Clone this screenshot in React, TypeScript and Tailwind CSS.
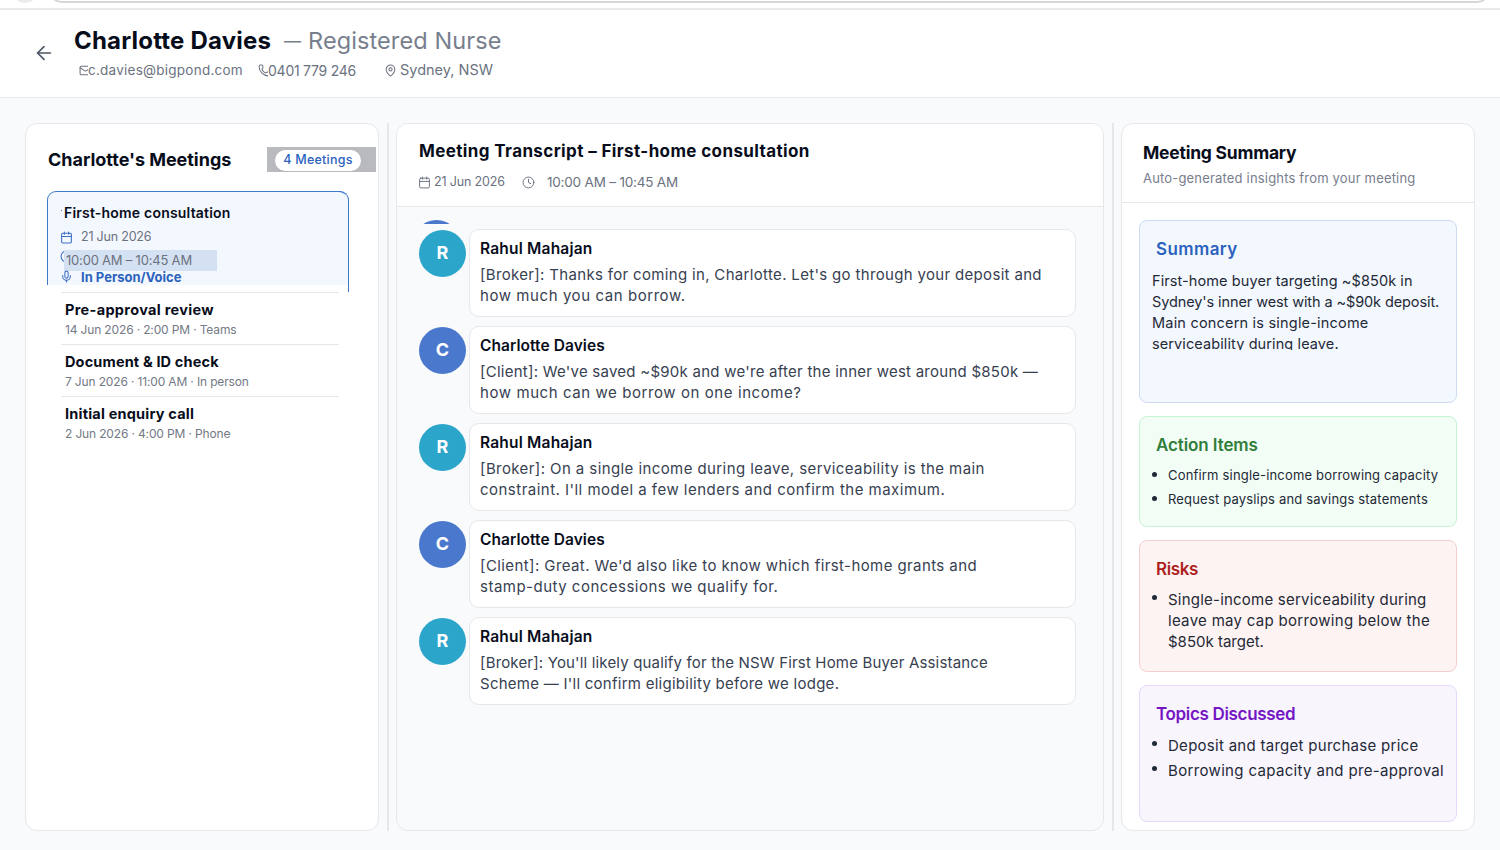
import { ArrowLeft, Calendar, Clock, Mail, MapPin, Mic, Phone } from "lucide-react";
import clsx from "clsx";

interface Message {
  initial: string;
  name: string;
  lines: { text: string; className: string }[];
}

const messages: Message[] = [
  {
    initial: "R",
    name: "Rahul Mahajan",
    lines: [
      { text: "[Broker]: Thanks for coming in, Charlotte. Let's go through your deposit and", className: "tracking-[0.33px]" },
      { text: "how much you can borrow.", className: "tracking-[0.57px]" },
    ],
  },
  {
    initial: "C",
    name: "Charlotte Davies",
    lines: [
      { text: "[Client]: We've saved ~$90k and we're after the inner west around $850k —", className: "tracking-[0.25px]" },
      { text: "how much can we borrow on one income?", className: "tracking-[0.58px]" },
    ],
  },
  {
    initial: "R",
    name: "Rahul Mahajan",
    lines: [
      { text: "[Broker]: On a single income during leave, serviceability is the main", className: "tracking-[0.41px]" },
      { text: "constraint. I'll model a few lenders and confirm the maximum.", className: "tracking-[0.48px]" },
    ],
  },
  {
    initial: "C",
    name: "Charlotte Davies",
    lines: [
      { text: "[Client]: Great. We'd also like to know which first-home grants and", className: "tracking-[0.41px]" },
      { text: "stamp-duty concessions we qualify for.", className: "tracking-[0.49px]" },
    ],
  },
  {
    initial: "R",
    name: "Rahul Mahajan",
    lines: [
      { text: "[Broker]: You'll likely qualify for the NSW First Home Buyer Assistance", className: "tracking-[0.17px]" },
      { text: "Scheme — I'll confirm eligibility before we lodge.", className: "tracking-[0.26px]" },
    ],
  },
];

const pastMeetings = [
  { title: "Pre-approval review", meta: "14 Jun 2026 · 2:00 PM · Teams", className: "tracking-[0.32px]" },
  { title: "Document & ID check", meta: "7 Jun 2026 · 11:00 AM · In person", className: "tracking-[0.15px]" },
  { title: "Initial enquiry call", meta: "2 Jun 2026 · 4:00 PM · Phone", className: "tracking-[0.2px]" },
];

function BrowserEdge() {
  return (
    <div className="flex h-[10px] items-start overflow-hidden border-b-2 border-[#e9eaec] bg-white">
      <div className="-mt-[25px] ml-[11px] h-[28px] w-[28px] shrink-0 rounded-full bg-[#ececee]" />
      <div className="-mt-[25px] ml-[9px] h-[28px] w-[1443px] shrink-0 rounded-full border-2 border-[#d5d6d8] bg-white" />
    </div>
  );
}

function ClientHeader() {
  return (
    <header className="flex h-[88px] border-b border-[#e5e7eb] bg-white">
      <ArrowLeft className="ml-[33px] mt-[32px] h-[22px] w-[22px] text-[#4b5563]" strokeWidth={1.8} />
      <div className="ml-[19px] pt-[15px]">
        <div className="flex h-[32px] items-center leading-8">
          <h1 className="w-[210px] text-[24px] font-bold tracking-[0.2px] text-[#080d1b]">Charlotte Davies</h1>
          <span className="w-[24px] text-[17px] text-[#777e8c]">—</span>
          <span className="text-[23.5px] tracking-[0.1px] text-[#777e8c]">Registered Nurse</span>
        </div>
        <div className="mt-[3px] flex h-5 items-center text-[#6b7280]">
          <div className="ml-[5px] flex w-[179px] items-center">
            {/* the label sits over the right half of the envelope */}
            <div className="w-[9px] overflow-hidden">
              <Mail className="h-[13px] w-[13px]" strokeWidth={1.9} />
            </div>
            <span className="text-[13.5px] tracking-[0.24px]">c.davies@bigpond.com</span>
          </div>
          <div className="flex w-[127px] items-center">
            <div className="w-[10px] overflow-hidden">
              <Phone className="h-[13px] w-[13px]" strokeWidth={1.9} />
            </div>
            <span className="text-[14px] tracking-[-0.25px]">0401 779 246</span>
          </div>
          <MapPin className="-ml-[1px] h-[13px] w-[13px]" strokeWidth={1.9} />
          <span className="ml-[3px] text-[14.5px]">Sydney, NSW</span>
        </div>
      </div>
    </header>
  );
}

function MeetingsPanel() {
  return (
    <aside className="w-[354px] shrink-0 rounded-[12px] border border-[#e5e7eb] bg-white">
      <div className="mt-[23px] flex h-[25px] items-center justify-between pl-[22px] pr-[2px]">
        <h2 className="text-[18px] font-bold tracking-[-0.03px] text-[#080d1b]">Charlotte's Meetings</h2>
        <div className="flex h-[25px] w-[109px] items-end bg-[#b9babd] pb-px pl-2">
          <span className="flex h-[21px] w-[86px] items-center justify-center rounded-full bg-white pb-px text-[12.5px] font-medium tracking-[0.25px] text-[#2b62bd]">
            4 Meetings
          </span>
        </div>
      </div>

      <div className="ml-[21px] mt-[19px] flex h-[101px] w-[302px] items-start">
        <div className="h-[94px] w-[301px] rounded-t-[9px] border border-b-0 border-[#3f78cb] border-r-transparent bg-[#f3f7fe] pl-[12px]">
          <div className="mt-[11px] flex h-5">
            <span className="ml-[1px] mt-[7px] h-px w-px bg-[#6b7280]" />
            <h3 className="ml-[2px] text-[14px] font-semibold leading-5 tracking-[0.2px] text-[#080d1b]">
              First-home consultation
            </h3>
          </div>
          <div className="mt-[4px] flex h-5 items-center">
            <Calendar className="h-[13px] w-[13px] text-[#3f70c4]" strokeWidth={2} />
            <span className="ml-[8px] text-[12.5px] tracking-[-0.2px] text-[#6b7280]">21 Jun 2026</span>
          </div>
          <div className="mt-[3px] flex h-[21px]">
            <div className="w-[4px] overflow-hidden">
              <Clock className="h-[13px] w-[13px] text-[#3f70c4]" strokeWidth={2} />
            </div>
            <div className="w-[153px] bg-[#d4e1f2] pl-[2px] text-[13px] leading-[21px] tracking-[-0.2px] text-[#6b7280]">
              10:00 AM – 10:45 AM
            </div>
          </div>
          <div className="flex h-[11px] items-center">
            <Mic className="h-[13px] w-[13px] text-[#3f70c4]" strokeWidth={2} />
            <span className="ml-[8px] text-[13px] font-bold leading-3 text-[#2b62bd]">In Person/Voice</span>
          </div>
        </div>
        <div className="-ml-[9px] h-[101px] w-[10px] rounded-tr-[9px] border-r border-t border-[#3f78cb]" />
      </div>

      <ul className="ml-[35px] w-[278px]">
        {pastMeetings.map((m) => (
          <li key={m.title} className="h-[52px] border-t border-[#e5e7eb] pl-[4px] pt-[7px]">
            <div className={clsx("h-5 text-[14.5px] font-bold leading-5 text-[#080d1b]", m.className)}>{m.title}</div>
            <div className="h-5 text-[12px] leading-5 tracking-[-0.15px] text-[#737985]">{m.meta}</div>
          </li>
        ))}
      </ul>
    </aside>
  );
}

function TranscriptPanel() {
  return (
    <main className="w-[708px] shrink-0 overflow-hidden rounded-[12px] border border-[#e5e7eb] bg-[#f9fafc]">
      <div className="h-[83px] border-b border-[#e5e7eb] bg-white pl-[22px] pt-[15px]">
        <h2 className="h-6 text-[17px] font-bold leading-6 tracking-[0.38px] text-[#080d1b]">
          Meeting Transcript – First-home consultation
        </h2>
        <div className="mt-[9px] flex h-5 items-center whitespace-nowrap text-[#6b7280]">
          <Calendar className="-ml-[1px] h-[13px] w-[13px]" strokeWidth={1.8} />
          <span className="ml-[3px] w-[88px] text-[12.5px] tracking-[-0.15px]">21 Jun 2026</span>
          <Clock className="h-[13px] w-[13px]" strokeWidth={1.8} />
          <span className="ml-[12px] text-[13.5px] tracking-[-0.2px]">10:00 AM – 10:45 AM</span>
        </div>
      </div>

      <div className="pl-[22px] pt-[13px]">
        {/* last bit of the previous avatar, scrolled out of view */}
        <div className="h-[4px] overflow-hidden">
          <div className="-ml-[6px] h-[47px] w-[47px] rounded-full bg-[#4a78cc]" />
        </div>
        <div className="mt-[5px] space-y-[9px]">
          {messages.map((m, i) => (
            <div key={i} className="flex">
              <div
                className={clsx(
                  "mt-px flex h-[47px] w-[47px] shrink-0 items-center justify-center rounded-full pb-[2px] text-[18px] font-bold text-white",
                  m.initial === "R" ? "bg-[#2ca5cb]" : "bg-[#4a78cc]"
                )}
              >
                {m.initial}
              </div>
              <div className="ml-[3px] h-[88px] w-[607px] whitespace-nowrap rounded-[10px] border border-[#e5e7eb] bg-white pl-[10px] pt-[9px]">
                <div
                  className={clsx(
                    "h-5 text-[15.5px] font-semibold leading-5 text-[#080d1b]",
                    m.initial === "R" ? "tracking-[0.2px]" : "tracking-[0.06px]"
                  )}
                >
                  {m.name}
                </div>
                <div className="mt-[5px] text-[15px] leading-[21px] text-[#374151]">
                  {m.lines.map((l) => (
                    <div key={l.text} className={l.className}>{l.text}</div>
                  ))}
                </div>
              </div>
            </div>
          ))}
        </div>
      </div>
    </main>
  );
}

function Bullet({ className }: { className?: string }) {
  return <span className={clsx("h-[5px] w-[5px] shrink-0 rounded-full bg-[#1f2937]", className)} />;
}

function SummaryPanel() {
  return (
    <aside className="w-[354px] shrink-0 rounded-[12px] border border-[#e5e7eb] bg-white">
      <div className="h-[79px] border-b border-[#e5e7eb] pl-[21px] pt-[17px]">
        <h2 className="h-6 text-[17.5px] font-bold leading-6 tracking-[-0.23px] text-[#080d1b]">Meeting Summary</h2>
        <p className="mt-[3px] text-[13px] leading-5 tracking-[0.18px] text-[#777e8c]">
          Auto-generated insights from your meeting
        </p>
      </div>

      <div className="whitespace-nowrap px-[17px] pt-[17px] text-[#1f2937]">
        <section className="h-[183px] rounded-[8px] border border-[#cddbf3] bg-[#f3f7fe] pl-[12px] pt-[16px]">
          <h3 className="h-6 pl-1 text-[17px] font-semibold leading-6 tracking-[0.4px] text-[#2b62bd]">Summary</h3>
          <div className="mt-[9px] h-[80px] overflow-hidden text-[14.5px] leading-[21px]">
            <div className="tracking-[0.09px]">First-home buyer targeting ~$850k in</div>
            <div className="tracking-[-0.1px]">Sydney's inner west with a ~$90k deposit.</div>
            <div className="tracking-[0.2px]">Main concern is single-income</div>
            <div className="tracking-[0.1px]">serviceability during leave.</div>
          </div>
        </section>

        <section className="mt-[13px] h-[111px] rounded-[8px] border border-[#c6f3d3] bg-[#f2fdf5] pl-[12px] pt-[16px]">
          <h3 className="h-6 pl-[4px] text-[17px] font-semibold leading-6 tracking-[-0.1px] text-[#317e3c]">Action Items</h3>
          <div className="mt-[6px] flex h-6 text-[13px] leading-6 tracking-[0.18px]">
            <Bullet className="mr-[11px] mt-[9px]" />
            <span>Confirm single-income borrowing capacity</span>
          </div>
          <div className="flex h-6 text-[13px] leading-6 tracking-[0.18px]">
            <Bullet className="mr-[11px] mt-[9px]" />
            <span>Request payslips and savings statements</span>
          </div>
        </section>

        <section className="mt-[13px] h-[132px] rounded-[8px] border border-[#f5cfcf] bg-[#fdf3f2] pl-[12px] pt-[16px]">
          <h3 className="h-6 pl-[4px] text-[17px] font-semibold leading-6 tracking-[-0.4px] text-[#ad1f1f]">Risks</h3>
          <div className="mt-[8px] flex text-[15px] leading-[21px]">
            <Bullet className="mr-[11px] mt-[6px]" />
            <div>
              <div className="tracking-[0.22px]">Single-income serviceability during</div>
              <div className="tracking-[0.3px]">leave may cap borrowing below the</div>
              <div>$850k target.</div>
            </div>
          </div>
        </section>

        <section className="mt-[13px] h-[137px] rounded-[8px] border border-[#e5d8fa] bg-[#f8f5fd] pl-[12px] pt-[16px]">
          <h3 className="h-6 pl-[4px] text-[17px] font-semibold leading-6 tracking-[-0.33px] text-[#7416c4]">
            Topics Discussed
          </h3>
          <div className="mt-[7px] flex h-[25px] text-[15px] leading-[25px] tracking-[0.28px]">
            <Bullet className="mr-[11px] mt-[8px]" />
            <span>Deposit and target purchase price</span>
          </div>
          <div className="flex h-[25px] text-[15px] leading-[25px] tracking-[0.34px]">
            <Bullet className="mr-[11px] mt-[8px]" />
            <span>Borrowing capacity and pre-approval</span>
          </div>
        </section>
      </div>
    </aside>
  );
}

export default function App() {
  return (
    <div className="h-[850px] w-[1500px] overflow-hidden whitespace-nowrap bg-[#f9fafc] font-['Inter',sans-serif]">
      <BrowserEdge />
      <ClientHeader />
      <div className="ml-[25px] mt-[25px] flex h-[708px]">
        <MeetingsPanel />
        <div className="ml-2 mr-[7px] w-[2px] shrink-0 bg-[#e5e7eb]" />
        <TranscriptPanel />
        <div className="ml-2 mr-[7px] w-[2px] shrink-0 bg-[#e5e7eb]" />
        <SummaryPanel />
      </div>
    </div>
  );
}
